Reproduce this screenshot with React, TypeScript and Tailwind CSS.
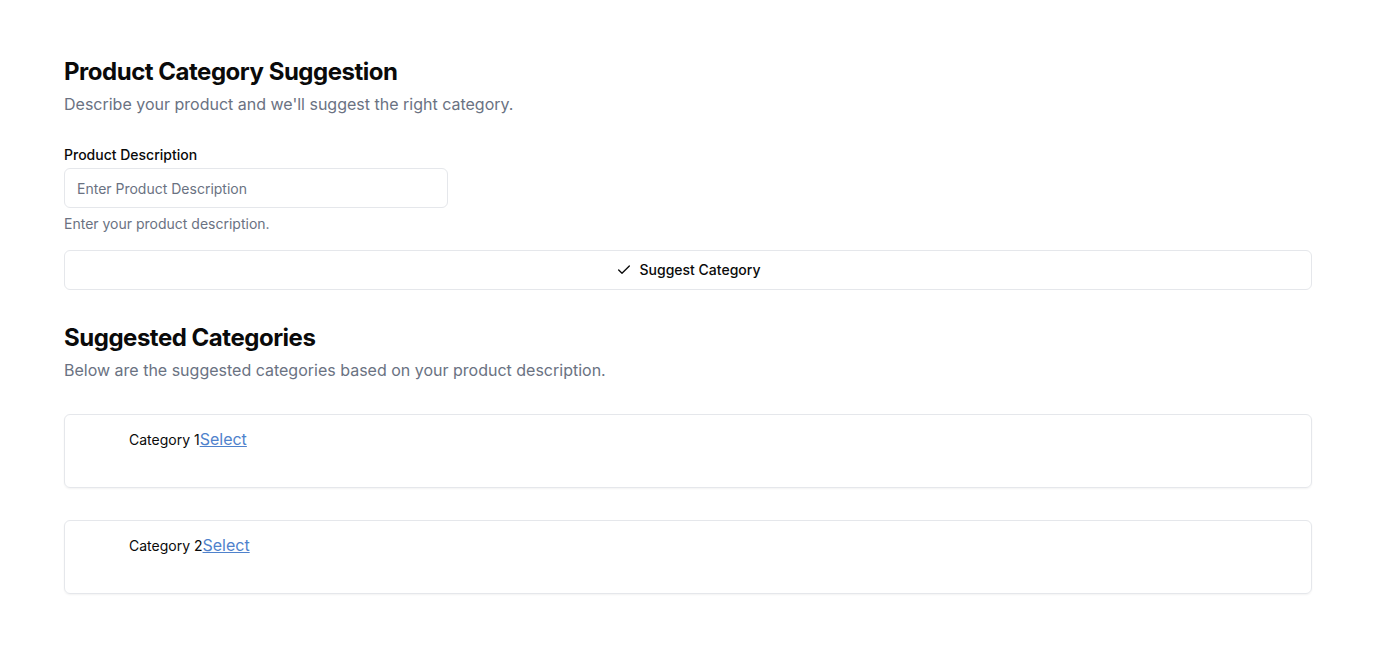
import { Check } from 'lucide-react';

export default function App() {
  const categories = ['Category 1', 'Category 2'];

  return (
    <div className="min-h-screen bg-white px-16 pt-[56px] font-['Inter',sans-serif] text-[#0a0a0a]">
      {/* Form */}
      <h1 className="text-2xl font-bold leading-8 tracking-[-0.02em]">Product Category Suggestion</h1>
      <p className="mt-1 text-base leading-6 text-gray-500">
        Describe your product and we'll suggest the right category.
      </p>

      <label className="mt-[29px] block text-sm font-medium leading-5">Product Description</label>
      <input
        className="mt-[3px] block h-10 w-96 rounded-md border border-gray-200 px-3 text-sm placeholder:text-gray-500 outline-none"
        placeholder="Enter Product Description"
      />
      <p className="mt-[6px] text-sm leading-5 text-gray-500">Enter your product description.</p>

      <button className="mt-4 flex h-10 w-full items-center justify-center gap-2 rounded-md border border-gray-200 bg-white text-sm font-medium">
        <Check className="h-4 w-4" strokeWidth={2} />
        Suggest Category
      </button>

      {/* Results */}
      <h2 className="mt-8 text-2xl font-bold leading-8 tracking-[-0.02em]">Suggested Categories</h2>
      <p className="mt-1 text-base leading-6 text-gray-500">
        Below are the suggested categories based on your product description.
      </p>

      <div className="mt-8 flex flex-col gap-8">
        {categories.map((name) => (
          <div key={name} className="h-[74px] rounded-md border border-gray-200 pl-16 pt-3 shadow-xs">
            <span className="text-sm leading-5">{name}</span>
            <a href="#" className="text-base leading-5 text-[#4f82cc] underline">
              Select
            </a>
          </div>
        ))}
      </div>
    </div>
  );
}
